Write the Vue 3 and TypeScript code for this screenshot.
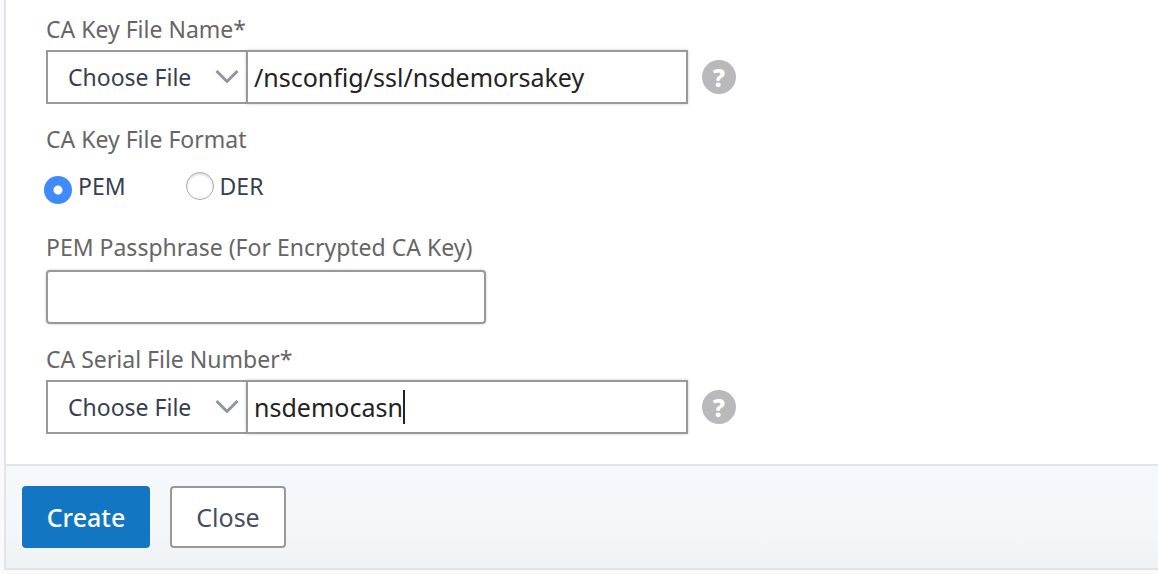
<script setup lang="ts">
import { nextTick, onMounted, ref, watch } from 'vue'

const keyFile = ref('/nsconfig/ssl/nsdemorsakey')
const keyFormat = ref<'PEM' | 'DER'>('PEM')
const passphrase = ref('')
const serialFile = ref('nsdemocasn')

const serialInput = ref<HTMLInputElement | null>(null)
const caretLeft = ref(0)

// Places the custom caret right behind the typed text.
function placeCaret(): void {
  const el = serialInput.value
  const ctx = document.createElement('canvas').getContext('2d')
  if (!el || !ctx) return
  const style = getComputedStyle(el)
  ctx.font = `${style.fontSize} ${style.fontFamily}`
  const inset = parseFloat(style.paddingLeft) + parseFloat(style.borderLeftWidth)
  caretLeft.value = Math.round(inset + ctx.measureText(el.value).width)
}

onMounted(placeCaret)
watch(serialFile, () => nextTick(placeCaret))
</script>

<template>
  <form class="panel" @submit.prevent>
    <div class="body">
      <div class="field">
        <label class="caption" for="key-file">CA Key File Name*</label>
        <div class="row">
          <div class="combo">
            <div class="picker">
              <select aria-label="CA key file source">
                <option>Choose File</option>
              </select>
              <svg class="chevron" viewBox="0 0 24 14" aria-hidden="true">
                <path d="M1.500 1 12 11.500 22.500 1" />
              </svg>
            </div>
            <div class="entry">
              <input id="key-file" v-model="keyFile" class="text" type="text" spellcheck="false" />
            </div>
          </div>
          <button class="help" type="button" aria-label="Help on CA key file name">?</button>
        </div>
      </div>

      <fieldset class="field formats">
        <legend class="caption">CA Key File Format</legend>
        <div class="options">
          <label class="option">
            <input v-model="keyFormat" type="radio" name="format" value="PEM" />
            <span>PEM</span>
          </label>
          <label class="option">
            <input v-model="keyFormat" type="radio" name="format" value="DER" />
            <span>DER</span>
          </label>
        </div>
      </fieldset>

      <div class="field secret">
        <label class="caption" for="passphrase">PEM Passphrase (For Encrypted CA Key)</label>
        <input id="passphrase" v-model="passphrase" class="text rounded" type="password" />
      </div>

      <div class="field">
        <label class="caption" for="serial-file">CA Serial File Number*</label>
        <div class="row">
          <div class="combo">
            <div class="picker">
              <select aria-label="CA serial file source">
                <option>Choose File</option>
              </select>
              <svg class="chevron" viewBox="0 0 24 14" aria-hidden="true">
                <path d="M1.500 1 12 11.500 22.500 1" />
              </svg>
            </div>
            <div class="entry">
              <input
                id="serial-file"
                ref="serialInput"
                v-model="serialFile"
                class="text"
                type="text"
                spellcheck="false"
              />
              <span class="caret" :style="{ left: caretLeft + 'px' }"></span>
            </div>
          </div>
          <button class="help" type="button" aria-label="Help on CA serial file number">?</button>
        </div>
      </div>
    </div>

    <div class="footer">
      <button class="btn primary" type="submit">Create</button>
      <button class="btn" type="button">Close</button>
    </div>
  </form>
</template>

<style>
body {
  background: #fafafa;
}
</style>

<style scoped>
.panel,
.panel * {
  box-sizing: border-box;
}

.panel {
  margin-left: 4px;
  border-left: 2px solid #e1e5ea;
  border-bottom: 2px solid #dfe4e7;
  background: #fff;
  color: #363f50;
  font-family: 'Noto Sans', 'Open Sans', sans-serif;
  font-size: 23px;
}

input,
select,
button {
  font-family: inherit;
  margin: 0;
}

.body {
  display: flex;
  flex-direction: column;
  gap: 20px;
  padding: 14px 40px 30px;
}

.field {
  display: flex;
  flex-direction: column;
  align-items: flex-start;
  gap: 6px;
  min-width: 0;
  margin: 0;
  padding: 0;
  border: 0;
}

.secret {
  gap: 8px;
}

.caption {
  padding: 0;
  color: #666;
  line-height: 30px;
}

.row {
  display: flex;
  align-items: center;
  gap: 14px;
  width: 100%;
}

.combo {
  display: flex;
  width: 642px;
  max-width: 100%;
}

.picker {
  display: grid;
  flex: none;
  align-items: center;
  width: 200px;
}

.picker select {
  grid-area: 1 / 1;
  width: 100%;
  height: 54px;
  padding: 0 20px;
  border: 2px solid #999;
  border-right: 0;
  border-radius: 0;
  background: #fff;
  color: #363f50;
  font-size: 23px;
  appearance: none;
}

.chevron {
  grid-area: 1 / 1;
  justify-self: end;
  width: 24px;
  height: 14px;
  margin-right: 7px;
  fill: none;
  stroke: #8f97a3;
  stroke-width: 3;
  pointer-events: none;
}

.entry {
  position: relative;
  flex: 1;
  min-width: 0;
}

.text {
  display: block;
  width: 100%;
  height: 54px;
  padding: 0 6px;
  border: 2px solid #999;
  border-radius: 0;
  outline: 0;
  background: #fff;
  box-shadow: 0 0 3px rgba(0, 0, 0, 0.2);
  color: #24221f;
  font-size: 25px;
}

.rounded {
  width: 440px;
  max-width: 100%;
  border-radius: 4px;
}

.caret {
  position: absolute;
  top: 10px;
  width: 2px;
  height: 34px;
  background: #24221f;
  pointer-events: none;
}

.help {
  flex: none;
  width: 34px;
  height: 34px;
  padding: 0;
  border: 0;
  border-radius: 50%;
  background: #b9b9bb;
  color: #fff;
  font-size: 25px;
  font-weight: 800;
  line-height: 34px;
}

.formats {
  margin-bottom: 8px;
}

.options {
  display: flex;
  gap: 60px;
  margin-left: -2px;
  padding-top: 18px;
}

.option {
  display: flex;
  gap: 6px;
  height: 32px;
  line-height: 28px;
}

.option input {
  width: 28px;
  height: 28px;
  border: 1px solid #aaa;
  border-radius: 50%;
  background: #fff;
  box-shadow: inset 0 2px 2px rgba(0, 0, 0, 0.12);
  appearance: none;
}

.option input:checked {
  align-self: flex-end;
  border: 0;
  background: radial-gradient(circle, #fff 0 4px, #3f8bfb 5px);
  box-shadow: none;
}

.footer {
  display: flex;
  gap: 20px;
  padding: 20px 16px;
  border-top: 2px solid #e1e5e8;
  background: linear-gradient(#f5f9fd 0%, #f4f8fb 50%, #eff3f6 100%);
}

.btn {
  min-width: 116px;
  height: 62px;
  padding: 0 22px;
  border: 2px solid #999;
  border-radius: 4px;
  background: #fff;
  color: #464f60;
  font-size: 25px;
}

.primary {
  min-width: 128px;
  border-color: #1276c2;
  background: #1276c2;
  color: #fff;
  font-weight: 500;
}
</style>
